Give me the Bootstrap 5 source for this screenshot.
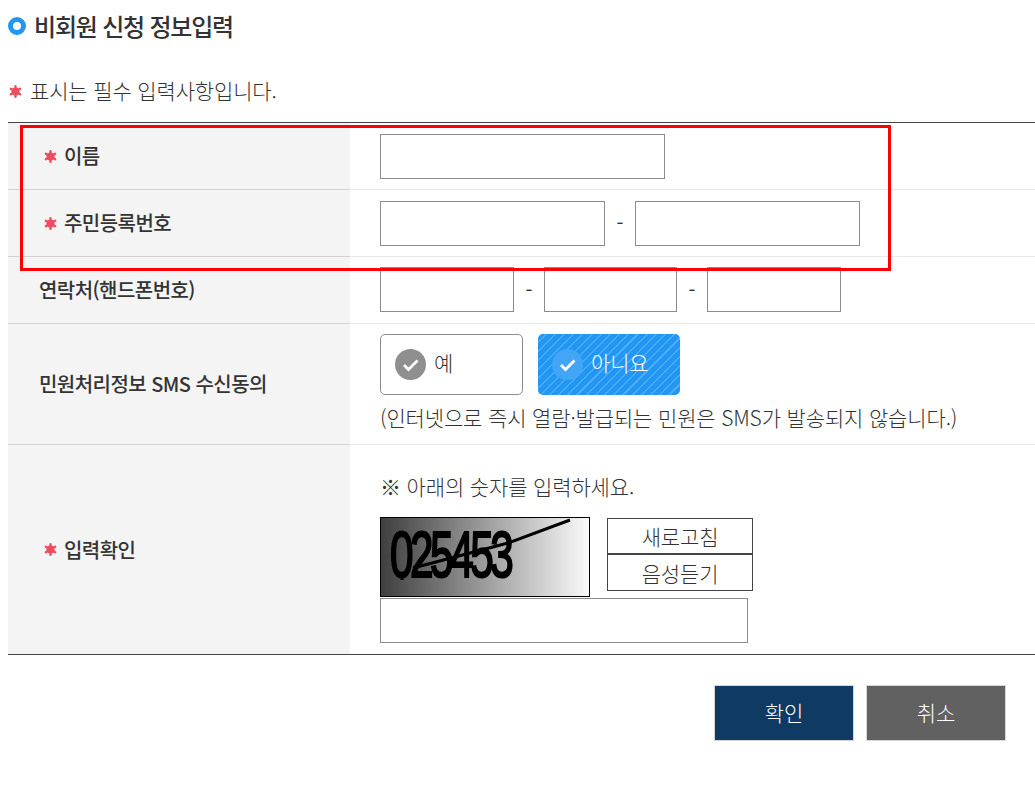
<!DOCTYPE html>
<html lang="ko">
<head>
    <meta charset="UTF-8">
    <title>비회원 신청 정보입력</title>
    <link href="https://cdn.jsdelivr.net/npm/bootstrap@5.3.0/dist/css/bootstrap.min.css" rel="stylesheet">
    <script src="https://cdn.jsdelivr.net/npm/bootstrap@5.3.0/dist/js/bootstrap.bundle.min.js"></script>
    <style>
        body {
            font-family: "Noto Sans CJK KR", "Noto Sans", sans-serif;
            font-size: 21px;
            font-weight: 300;
            color: #333;
            background: #fff;
            letter-spacing: -0.15px;
            overflow: hidden;
        }
        .page-wrap { position: relative; height: 795px; padding-left: 8px; }
        .page-title { height: 55px; padding-bottom: 4px; font-size: 24px; line-height: 34px; font-weight: 500; letter-spacing: -1.2px; margin: 0; gap: 8px; }
        .title-dot { width: 18px; height: 18px; border: 5px solid #2196f3; border-radius: 50%; }
        .req-note { height: 67px; padding-top: 20px; line-height: 30px; gap: 8px; padding-left: 1px; }
        .star-ico { width: 13px; height: 13px; flex: none; }
        .req-note .star-ico { margin-top: 10px; }
        .form-area { border-top: 1px solid #444; border-bottom: 1px solid #444; }
        .form-line { border-bottom: 1px solid #e9e9e9; }
        .form-line:last-child { border-bottom: 0; }
        .line-head { width: 342px; flex: none; background: #f4f4f4; border-bottom: 1px solid #d2d2d2; margin-bottom: -1px; padding-left: 36px; font-size: 20px; font-weight: 500; letter-spacing: -0.55px; gap: 7px; color: #333; }
        .form-line:last-child .line-head { border-bottom: 0; margin-bottom: 0; }
        .line-head.no-star { padding-left: 31px; }
        .line-body { padding-left: 30px; }
        .phone-body { padding-top: 10px; }
        .h-67 { height: 67px; }
        .h-121 { height: 121px; }
        .h-209 { height: 209px; }
        .txt-box { height: 45px; border: 1px solid #8c8c8c; background: #fff; border-radius: 0; display: block; outline: 0; padding: 0; }
        .w-285 { width: 285px; }
        .w-225 { width: 225px; }
        .w-134 { width: 134px; }
        .w-133 { width: 133px; }
        .w-368 { width: 368px; }
        .dash { width: 30px; text-align: center; font-size: 20px; font-weight: 400; }
        .radio-box { width: 143px; height: 61px; border: 1px solid #8c8c8c; border-radius: 5px; background: #fff; padding: 0 0 0 14px; gap: 8px; }
        .radio-box.is-on { width: 142px; margin-left: 15px; border: 0; color: #fff; background: repeating-linear-gradient(135deg, #2196f3 0 5px, #4aabf6 5px 6.5px); }
        .radio-box span { margin-top: -6px; line-height: 30px; }
        .chk-round { width: 31px; height: 31px; border-radius: 50%; background: #8f8f8f; flex: none; }
        .is-on .chk-round { background: #42a5f5; }
        .sms-pad { padding-top: 10px; }
        .sms-note { margin-top: 7px; line-height: 30px; white-space: nowrap; }
        .captcha-pad { padding-top: 26px; }
        .captcha-hint { line-height: 30px; margin-bottom: 16px; }
        .captcha-img { width: 210px; height: 80px; border: 1px solid #000; display: block; }
        .captcha-side { margin-left: 17px; padding-top: 1px; width: 146px; }
        .side-btn { height: 36px; width: 146px; border: 1px solid #444; background: #fff; font-size: 21px; font-weight: 300; color: #333; padding: 0; border-radius: 0; line-height: 32px; letter-spacing: -0.15px; }
        .side-btn + .side-btn { margin-top: -1px; height: 38px; border-top-width: 2px; }
        .captcha-input { margin-top: 1px; }
        .foot-btns { padding: 30px 29px 0 0; gap: 12px; }
        .big-btn { width: 140px; height: 56px; border: 1px solid #d6d6d6; border-radius: 0; color: #fff; font-size: 21px; font-weight: 300; padding: 0; letter-spacing: -0.15px; }
        .big-btn.ok-btn { background: #0e3a63; }
        .big-btn.no-btn { background: #616161; }
        .big-btn:hover { color: #fff; }
        .red-frame { position: absolute; left: 20px; top: 125px; width: 871px; height: 146px; border: 3px solid #f00; pointer-events: none; }
    </style>
</head>
<body>
    <svg width="0" height="0" class="position-absolute">
        <symbol id="req-star" viewBox="0 0 13 13">
            <g stroke="#ee4d5f" stroke-width="2.4" stroke-linecap="round">
                <path d="M6.5 1.2v10.6M1.8 3.8l9.4 5.4M11.2 3.8l-9.4 5.4"/>
            </g>
            <circle cx="6.5" cy="6.5" r="4" fill="#ee4d5f"/>
        </symbol>
        <symbol id="chk-mark" viewBox="0 0 31 31">
            <path d="M9 16l4.5 4.5L22.5 11.5" fill="none" stroke="#fff" stroke-width="2.8"/>
        </symbol>
    </svg>

    <div class="page-wrap">
        <h1 class="page-title d-flex align-items-center">
            <span class="title-dot d-block"></span>
            비회원 신청 정보입력
        </h1>
        <p class="req-note d-flex align-items-start m-0">
            <svg class="star-ico"><use href="#req-star"/></svg>
            표시는 필수 입력사항입니다.
        </p>

        <div class="form-area">
            <div class="form-line d-flex h-67">
                <div class="line-head d-flex align-items-center"><svg class="star-ico"><use href="#req-star"/></svg>이름</div>
                <div class="line-body d-flex align-items-center"><input class="txt-box w-285" type="text"></div>
            </div>
            <div class="form-line d-flex h-67">
                <div class="line-head d-flex align-items-center"><svg class="star-ico"><use href="#req-star"/></svg>주민등록번호</div>
                <div class="line-body d-flex align-items-center">
                    <input class="txt-box w-225" type="text">
                    <span class="dash">-</span>
                    <input class="txt-box w-225" type="text">
                </div>
            </div>
            <div class="form-line d-flex h-67">
                <div class="line-head no-star d-flex align-items-center">연락처(핸드폰번호)</div>
                <div class="line-body phone-body d-flex align-items-start">
                    <input class="txt-box w-134" type="text">
                    <span class="dash mt-2">-</span>
                    <input class="txt-box w-133" type="text">
                    <span class="dash mt-2">-</span>
                    <input class="txt-box w-134" type="text">
                </div>
            </div>
            <div class="form-line d-flex h-121">
                <div class="line-head no-star d-flex align-items-center">민원처리정보 SMS 수신동의</div>
                <div class="line-body sms-pad">
                    <div class="d-flex">
                        <div class="radio-box d-flex align-items-center">
                            <svg class="chk-round"><use href="#chk-mark"/></svg><span>예</span>
                        </div>
                        <div class="radio-box is-on d-flex align-items-center">
                            <svg class="chk-round"><use href="#chk-mark"/></svg><span>아니요</span>
                        </div>
                    </div>
                    <div class="sms-note">(인터넷으로 즉시 열람·발급되는 민원은 SMS가 발송되지 않습니다.)</div>
                </div>
            </div>
            <div class="form-line d-flex h-209">
                <div class="line-head d-flex align-items-center"><svg class="star-ico"><use href="#req-star"/></svg>입력확인</div>
                <div class="line-body captcha-pad">
                    <div class="captcha-hint">※ 아래의 숫자를 입력하세요.</div>
                    <div class="d-flex">
                        <svg class="captcha-img" viewBox="0 0 208 78">
                            <defs>
                                <linearGradient id="cap-grad" x1="0" x2="1" y1="0" y2="0">
                                    <stop offset="0" stop-color="#3f3f3f"/>
                                    <stop offset="1" stop-color="#fafafa"/>
                                </linearGradient>
                            </defs>
                            <rect width="208" height="78" fill="url(#cap-grad)"/>
                            <text transform="translate(9 59) scale(.65 1)" font-family="Liberation Sans, sans-serif" font-size="65" letter-spacing="-5.3" fill="#000" stroke="#000" stroke-width="2.2">025453</text>
                            <path d="M189 2L127 25L32 50" stroke="#000" stroke-width="3" fill="none"/>
                            <path d="M21 55v7" stroke="#000" stroke-width="3"/>
                        </svg>
                        <div class="captcha-side">
                            <button type="button" class="btn side-btn d-block">새로고침</button>
                            <button type="button" class="btn side-btn d-block">음성듣기</button>
                        </div>
                    </div>
                    <input class="txt-box w-368 captcha-input" type="text">
                </div>
            </div>
        </div>

        <div class="foot-btns d-flex justify-content-end">
            <button type="button" class="btn big-btn ok-btn">확인</button>
            <button type="button" class="btn big-btn no-btn">취소</button>
        </div>

        <div class="red-frame"></div>
    </div>
</body>
</html>
